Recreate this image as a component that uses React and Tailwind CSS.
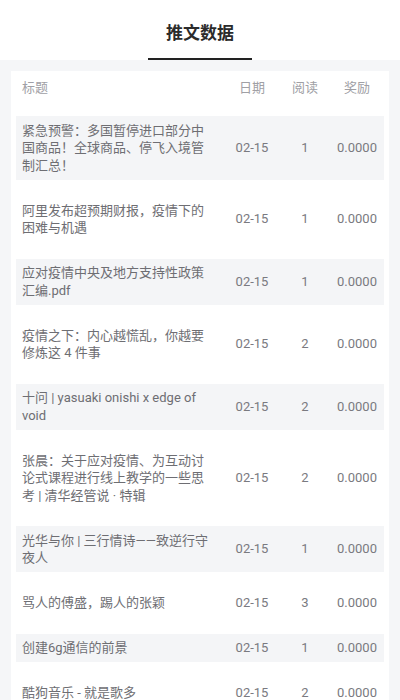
const rows = [
  { title: "紧急预警：多国暂停进口部分中国商品！全球商品、停飞入境管制汇总！", date: "02-15", read: 1, reward: "0.0000" },
  { title: "阿里发布超预期财报，疫情下的困难与机遇", date: "02-15", read: 1, reward: "0.0000" },
  { title: "应对疫情中央及地方支持性政策汇编.pdf", date: "02-15", read: 1, reward: "0.0000" },
  { title: "疫情之下：内心越慌乱，你越要修炼这 4 件事", date: "02-15", read: 2, reward: "0.0000" },
  { title: "十问 | yasuaki onishi x edge of void", date: "02-15", read: 2, reward: "0.0000" },
  { title: "张晨：关于应对疫情、为互动讨论式课程进行线上教学的一些思考 | 清华经管说 · 特辑", date: "02-15", read: 2, reward: "0.0000" },
  { title: "光华与你 | 三行情诗——致逆行守夜人", date: "02-15", read: 1, reward: "0.0000" },
  { title: "骂人的傅盛，踢人的张颖", date: "02-15", read: 3, reward: "0.0000" },
  { title: "创建6g通信的前景", date: "02-15", read: 1, reward: "0.0000" },
  { title: "酷狗音乐 - 就是歌多", date: "02-15", read: 2, reward: "0.0000" },
];

export default function App() {
  return (
    <div
      className="min-h-[700px] w-[400px] bg-[#f5f6f8] overflow-hidden"
      style={{ fontFamily: "Roboto, 'Noto Sans CJK SC', sans-serif" }}
    >
      {/* Top tab header */}
      <div className="h-[60px] bg-white flex flex-col items-center">
        <div className="pt-[22px] text-[17px] leading-[22px] font-bold text-[#2b2b2b]">推文数据</div>
        <div className="mt-[14px] w-[104px] h-[2px] bg-[#222]" />
      </div>

      {/* Table card */}
      <div className="mx-[11px] mt-[11px] bg-white pb-[20px]">
        <div className="flex items-center h-[30px] pt-[4px] pl-[11px] pr-[5px] text-[13px] text-[#a0a0a5]">
          <div className="w-[190px] flex-none">标题</div>
          <div className="w-[80px] flex-none text-center">日期</div>
          <div className="w-[26px] flex-none text-center">阅读</div>
          <div className="ml-auto w-[54px] flex-none text-center">奖励</div>
        </div>

        <div className="flex flex-col gap-[16.5px] pt-[15px] px-[5px]">
          {rows.map((r, i) => (
            <div
              key={i}
              className={`flex items-center py-[5.5px] pl-[6px] text-[13px] leading-[17.5px] ${
                i % 2 === 0 ? "bg-[#f4f5f7]" : "bg-white"
              }`}
            >
              <div className="w-[190px] flex-none text-[#6e6e73] break-words">{r.title}</div>
              <div className="w-[80px] flex-none text-center text-[#7a7a80]">{r.date}</div>
              <div className="w-[26px] flex-none text-center text-[#7a7a80]">{r.read}</div>
              <div className="ml-auto w-[54px] flex-none text-center text-[#7a7a80]">{r.reward}</div>
            </div>
          ))}
        </div>
      </div>
    </div>
  );
}
